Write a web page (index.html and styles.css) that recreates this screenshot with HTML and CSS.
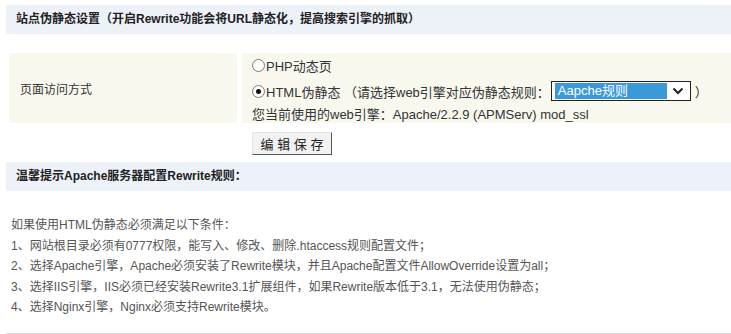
FILE: index.html
```html
<!DOCTYPE html>
<html lang="zh-CN">
<head>
<meta charset="utf-8">
<title>站点伪静态设置</title>
<link rel="stylesheet" href="styles.css">
</head>
<body>
<div class="page">
  <div class="hd">站点伪静态设置（开启Rewrite功能会将URL静态化，提高搜索引擎的抓取）</div>
  <div class="row">
    <div class="label">页面访问方式</div>
    <div class="opts">
      <div class="opt opt1"><span class="radio"></span>PHP动态页</div>
      <div class="opt opt2"><span class="radio checked"></span>HTML伪静态 （请选择web引擎对应伪静态规则：<span class="select"><span class="sel-val">Aapche规则</span><span class="sel-arrow"><svg width="12" height="8" viewBox="0 0 12 8"><path d="M1.5 1.5 L6 6 L10.5 1.5" fill="none" stroke="#222" stroke-width="2"/></svg></span></span>）</div>
      <div class="opt opt3">您当前使用的web引擎：Apache/2.2.9 (APMServ) mod_ssl</div>
    </div>
  </div>
  <div class="actions"><button class="btn">编 辑 保 存</button></div>
  <div class="hd hd2">温馨提示Apache服务器配置Rewrite规则：</div>
  <div class="notes">
    <p>如果使用HTML伪静态必须满足以下条件：</p>
    <p>1、网站根目录必须有0777权限，能写入、修改、删除.htaccess规则配置文件；</p>
    <p>2、选择Apache引擎，Apache必须安装了Rewrite模块，并且Apache配置文件AllowOverride设置为all；</p>
    <p>3、选择IIS引擎，IIS必须已经安装Rewrite3.1扩展组件，如果Rewrite版本低于3.1，无法使用伪静态；</p>
    <p>4、选择Nginx引擎，Nginx必须支持Rewrite模块。</p>
  </div>
</div>
</body>
</html>
```
FILE: styles.css
```css
html, body {
  margin: 0;
  padding: 0;
  background: #fff;
}
body {
  font-family: "Liberation Sans", "Noto Sans CJK SC", sans-serif;
  color: #333;
}
.page {
  padding: 5px 0 0 6px;
}
.hd {
  height: 29px;
  line-height: 29px;
  background: #edf1f8;
  padding-left: 10px;
  font-size: 12px;
  font-weight: bold;
  color: #222;
  white-space: nowrap;
}
.row {
  display: flex;
  gap: 5px;
  margin: 19px 0 0 3px;
  height: 70px;
}
.label {
  width: 217px;
  padding-left: 11px;
  background: #f9f8ef;
  display: flex;
  align-items: center;
  font-size: 12px;
  color: #333;
}
.opts {
  flex: 1;
  background: #f9f8ef;
  padding-left: 10px;
  font-size: 13px;
  color: #333;
  white-space: nowrap;
}
.opt {
  display: flex;
  align-items: center;
}
.opt1 { height: 25px; }
.opt2 { height: 26px; }
.opt3 { height: 19px; }
.radio {
  width: 11px;
  height: 11px;
  border: 1px solid #7a7a7a;
  border-radius: 50%;
  background: #fff;
  box-sizing: content-box;
  margin-right: 1px;
  position: relative;
  flex: none;
}
.radio.checked::after {
  content: "";
  position: absolute;
  left: 3px;
  top: 3px;
  width: 5px;
  height: 5px;
  border-radius: 50%;
  background: #111;
}
.select {
  display: inline-flex;
  align-items: center;
  width: 138px;
  height: 18px;
  border: 1px solid #222;
  background: #fff;
  margin: 0 4px 0 1px;
}
.sel-val {
  margin-left: 3px;
  width: 112px;
  height: 16px;
  line-height: 16px;
  background: #3a9ad9;
  color: #fff;
  padding-left: 3px;
  box-sizing: border-box;
}
.sel-arrow {
  flex: 1;
  display: flex;
  justify-content: center;
  align-items: center;
}
.actions {
  padding: 9px 0 0 246px;
  height: 23px;
}
.btn {
  display: block;
  width: 80px;
  height: 23px;
  padding: 0;
  margin: 0;
  background: #f2f2f2;
  border: 1px solid;
  border-color: #e4e4e4 #555 #555 #e4e4e4;
  font-family: "Liberation Sans", "Noto Sans CJK SC", sans-serif;
  font-size: 13px;
  color: #222;
}
.hd2 {
  margin-top: 7px;
}
.notes {
  margin-top: 24px;
  padding: 0 0 15px 5px;
  border-bottom: 1px solid #dcdcdc;
  font-size: 12px;
  color: #555;
}
.notes p {
  margin: 0;
  line-height: 20.5px;
  white-space: nowrap;
}
```
